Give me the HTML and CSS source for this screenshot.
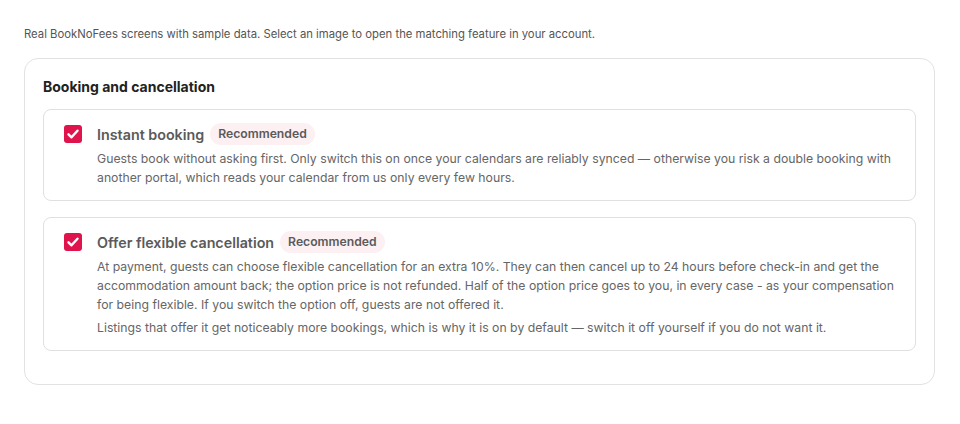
FILE: index.html
```html
<!DOCTYPE html>
<html lang="en">
<head>
<meta charset="utf-8">
<title>Booking and cancellation</title>
<link rel="stylesheet" href="styles.css">
</head>
<body>
<main class="page">
  <p class="intro">Real BookNoFees screens with sample data. Select an image to open the matching feature in your account.</p>
  <section class="panel">
    <h2 class="panel-title">Booking and cancellation</h2>
    <div class="options">
      <div class="option">
        <span class="check"><svg viewBox="0 0 18 18" width="18" height="18"><rect width="18" height="18" rx="3" fill="#e0144c"/><path d="M4.5 9.3l3 3 6-6.6" fill="none" stroke="#fff" stroke-width="2.4" stroke-linecap="round" stroke-linejoin="round"/></svg></span>
        <div class="option-body">
          <div class="option-head"><span class="option-title">Instant booking</span><span class="badge">Recommended</span></div>
          <p class="desc">Guests book without asking first. Only switch this on once your calendars are reliably synced — otherwise you risk a double booking with another portal, which reads your calendar from us only every few hours.</p>
        </div>
      </div>
      <div class="option">
        <span class="check"><svg viewBox="0 0 18 18" width="18" height="18"><rect width="18" height="18" rx="3" fill="#e0144c"/><path d="M4.5 9.3l3 3 6-6.6" fill="none" stroke="#fff" stroke-width="2.4" stroke-linecap="round" stroke-linejoin="round"/></svg></span>
        <div class="option-body">
          <div class="option-head"><span class="option-title">Offer flexible cancellation</span><span class="badge">Recommended</span></div>
          <p class="desc">At payment, guests can choose flexible cancellation for an extra 10%. They can then cancel up to 24 hours before check-in and get the accommodation amount back; the option price is not refunded. Half of the option price goes to you, in every case - as your compensation for being flexible. If you switch the option off, guests are not offered it.</p>
          <p class="desc desc-extra">Listings that offer it get noticeably more bookings, which is why it is on by default — switch it off yourself if you do not want it.</p>
        </div>
      </div>
    </div>
  </section>
</main>
</body>
</html>
```

FILE: styles.css
```css
* { box-sizing: border-box; }
html, body { margin: 0; padding: 0; background: #ffffff; }
body {
  font-family: "Inter", "Noto Sans", sans-serif;
  color: #222;
}
.page {
  padding: 26px 25px 0 24px;
}
.intro {
  margin: 0 0 16px;
  font-size: 11.3px;
  line-height: 16px;
  color: #555;
}
.panel {
  border: 1px solid #e2e2e2;
  border-radius: 14px;
  padding: 18px 18px 33px 18px;
  width: 911px;
}
.panel-title {
  margin: 0 0 12px;
  font-size: 14px;
  line-height: 20px;
  font-weight: 700;
  color: #222;
}
.options {
  display: flex;
  flex-direction: column;
  gap: 16px;
}
.option {
  display: flex;
  gap: 15px;
  border: 1px solid #e0e0e0;
  border-radius: 8px;
  padding: 14px 20px 13px 20px;
}
.check {
  flex: 0 0 auto;
  width: 18px;
  height: 18px;
  margin-top: 1px;
  display: block;
}
.check svg { display: block; }
.option-body { flex: 1; min-width: 0; }
.option-head {
  display: flex;
  align-items: center;
  gap: 6px;
  height: 20px;
  margin-bottom: 5px;
}
.option-title {
  font-size: 14.3px;
  font-weight: 600;
  color: #5a5a5a;
}
.badge {
  font-size: 12.2px;
  font-weight: 600;
  color: #5a5a5a;
  background: #fdf0f2;
  border-radius: 999px;
  padding: 3px 8px;
  line-height: 16px;
}
.desc {
  margin: 0;
  font-size: 12.25px;
  line-height: 19px;
  color: #666;
}
.desc-extra { margin-top: 4px; }
```
